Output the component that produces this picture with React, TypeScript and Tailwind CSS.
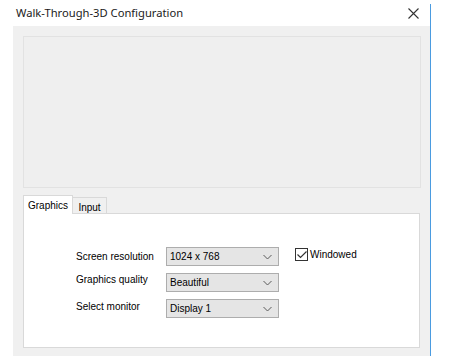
import React from "react";

function Chevron() {
  return (
    <svg width="9" height="6" viewBox="0 0 9 6" className="shrink-0">
      <path d="M0.5 1 L4.5 5 L8.5 1" fill="none" stroke="#5a5a5a" strokeWidth="1" />
    </svg>
  );
}

function Select({ value }: { value: string }) {
  return (
    <div className="flex h-[19px] w-[113px] items-center justify-between border border-[#adadad] bg-[#e5e5e5] pl-[3px] pr-[6px] text-[10px] text-black">
      <span>{value}</span>
      <Chevron />
    </div>
  );
}

export default function App() {
  return (
    <div
      className="relative h-[356px] w-[454px] overflow-hidden bg-white"
      style={{ fontFamily: '"Liberation Sans", Arial, sans-serif' }}
    >
      <div className="flex h-[26px] w-[430px] items-center justify-between pl-[16px] pr-[8px]">
        <span
          className="text-[11.2px] text-[#1a1a1a]"
          style={{ fontFamily: '"Noto Sans", "Liberation Sans", sans-serif' }}
        >
          Walk-Through-3D Configuration
        </span>
        <svg width="11" height="11" viewBox="0 0 11 11" className="mr-[3px]">
          <path d="M0.5 0.5 L10.5 10.5 M10.5 0.5 L0.5 10.5" stroke="#333" strokeWidth="1.1" />
        </svg>
      </div>
      <div className="absolute right-[23px] top-[4px] h-[352px] w-[1px] bg-[#4a9be0]" />
      <div className="ml-[13px] flex h-[330px] w-[417px] flex-col bg-[#f0f0f0] pl-[10px] pt-[10px]">
        <div className="h-[152px] w-[398px] border border-[#e2e2e2] bg-[#efefef]" />
        <div className="mt-[7px] flex h-[18px] items-end">
          <div className="z-10 -mb-[1px] flex h-[19px] w-[50px] items-start justify-center border border-b-0 border-[#d9d9d9] bg-white pt-[2px] text-[10px] text-black">
            Graphics
          </div>
          <div className="flex h-[16px] w-[34px] items-start justify-center border border-b-0 border-l-0 border-[#d9d9d9] bg-[#f0f0f0] pt-[2px] text-[10px] text-black">
            Input
          </div>
        </div>
        <div className="relative h-[135px] w-[397px] border border-[#d9d9d9] bg-white">
          <div className="ml-[52px] mt-[33px] flex whitespace-nowrap text-[10px] text-black">
            <div className="flex flex-col">
              <div className="flex h-[19px] items-center">
                <span className="w-[90px]">Screen resolution</span>
              </div>
              <div className="mt-[6px] flex h-[19px] items-start">
                <span className="w-[90px]">Graphics quality</span>
              </div>
              <div className="mt-[8px] flex h-[19px] items-start">
                <span className="w-[90px]">Select monitor</span>
              </div>
            </div>
            <div className="flex flex-col gap-[7px]">
              <Select value="1024 x 768" />
              <Select value="Beautiful" />
              <Select value="Display 1" />
            </div>
            <div className="ml-[16px] mt-[1px] flex h-[13px] items-center gap-[2px]">
              <div className="flex h-[13px] w-[13px] items-center justify-center border border-[#333] bg-white">
                <svg width="10" height="8" viewBox="0 0 10 8">
                  <path d="M0.5 3.5 L3.5 6.5 L9.5 0.5" fill="none" stroke="#333" strokeWidth="1.2" />
                </svg>
              </div>
              <span>Windowed</span>
            </div>
          </div>
        </div>
      </div>
    </div>
  );
}
